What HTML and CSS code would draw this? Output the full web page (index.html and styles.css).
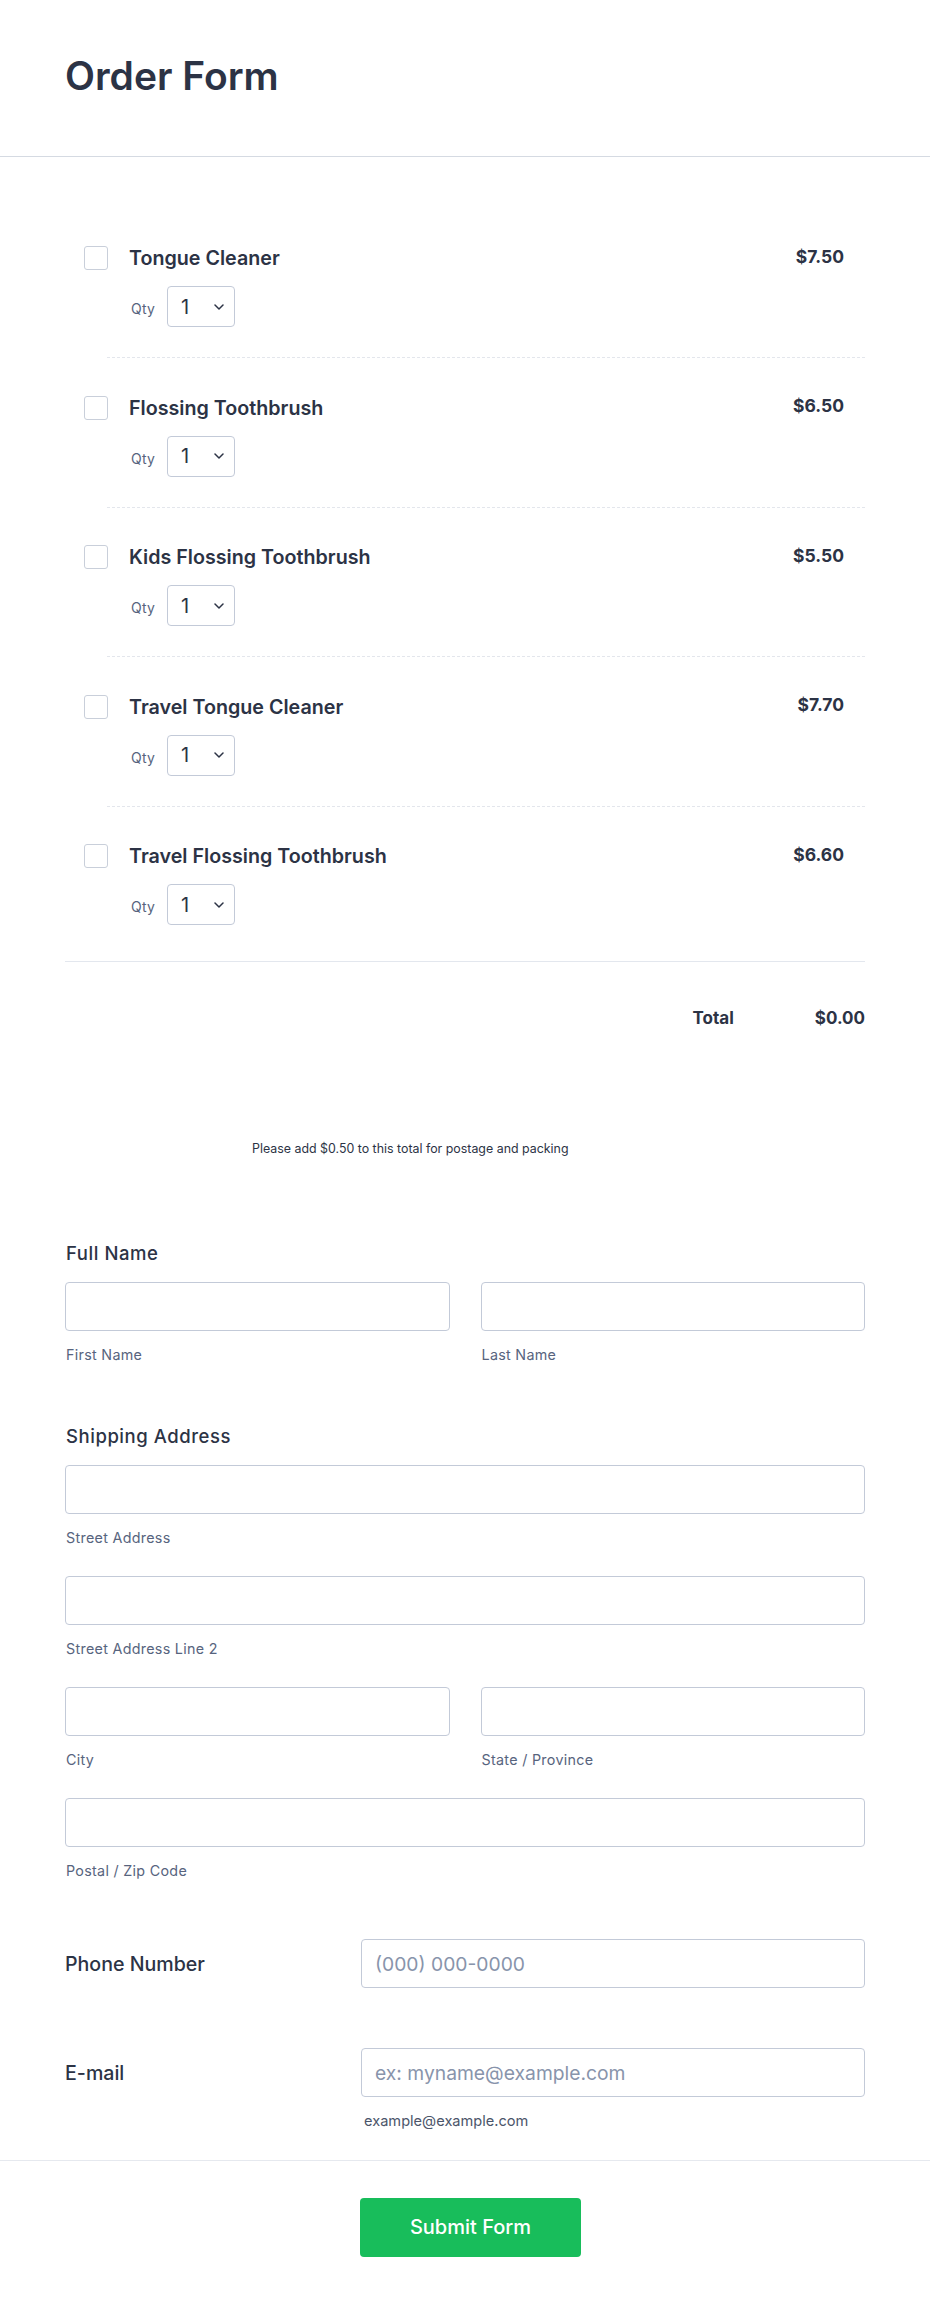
FILE: index.html
```html
<!DOCTYPE html>
<html lang="en">
<head>
<meta charset="utf-8">
<title>Order Form</title>
<link rel="stylesheet" href="styles.css">
</head>
<body>
<header class="header">
  <h1 class="title">Order Form</h1>
</header>

<main class="form">
  <section class="products">
    <div class="item">
      <span class="check"></span>
      <div class="item-body">
        <div class="item-name">Tongue Cleaner</div>
        <div class="qty">
          <span class="qty-label">Qty</span>
          <div class="select"><span class="select-value">1</span><svg class="chev" width="10" height="6" viewBox="0 0 10 6"><path d="M1 1l4 4 4-4" fill="none" stroke="#2c3345" stroke-width="1.5" stroke-linecap="round" stroke-linejoin="round"/></svg></div>
        </div>
      </div>
      <div class="price">$7.50</div>
    </div>
    <div class="sep"></div>
    <div class="item">
      <span class="check"></span>
      <div class="item-body">
        <div class="item-name">Flossing Toothbrush</div>
        <div class="qty">
          <span class="qty-label">Qty</span>
          <div class="select"><span class="select-value">1</span><svg class="chev" width="10" height="6" viewBox="0 0 10 6"><path d="M1 1l4 4 4-4" fill="none" stroke="#2c3345" stroke-width="1.5" stroke-linecap="round" stroke-linejoin="round"/></svg></div>
        </div>
      </div>
      <div class="price">$6.50</div>
    </div>
    <div class="sep"></div>
    <div class="item">
      <span class="check"></span>
      <div class="item-body">
        <div class="item-name">Kids Flossing Toothbrush</div>
        <div class="qty">
          <span class="qty-label">Qty</span>
          <div class="select"><span class="select-value">1</span><svg class="chev" width="10" height="6" viewBox="0 0 10 6"><path d="M1 1l4 4 4-4" fill="none" stroke="#2c3345" stroke-width="1.5" stroke-linecap="round" stroke-linejoin="round"/></svg></div>
        </div>
      </div>
      <div class="price">$5.50</div>
    </div>
    <div class="sep"></div>
    <div class="item">
      <span class="check"></span>
      <div class="item-body">
        <div class="item-name">Travel Tongue Cleaner</div>
        <div class="qty">
          <span class="qty-label">Qty</span>
          <div class="select"><span class="select-value">1</span><svg class="chev" width="10" height="6" viewBox="0 0 10 6"><path d="M1 1l4 4 4-4" fill="none" stroke="#2c3345" stroke-width="1.5" stroke-linecap="round" stroke-linejoin="round"/></svg></div>
        </div>
      </div>
      <div class="price">$7.70</div>
    </div>
    <div class="sep"></div>
    <div class="item item-last">
      <span class="check"></span>
      <div class="item-body">
        <div class="item-name">Travel Flossing Toothbrush</div>
        <div class="qty">
          <span class="qty-label">Qty</span>
          <div class="select"><span class="select-value">1</span><svg class="chev" width="10" height="6" viewBox="0 0 10 6"><path d="M1 1l4 4 4-4" fill="none" stroke="#2c3345" stroke-width="1.5" stroke-linecap="round" stroke-linejoin="round"/></svg></div>
        </div>
      </div>
      <div class="price">$6.60</div>
    </div>
    <div class="total">
      <span class="total-label">Total</span>
      <span class="total-value">$0.00</span>
    </div>
  </section>

  <p class="note">Please add $0.50 to this total for postage and packing</p>

  <div class="field field-name">
    <div class="field-label">Full Name</div>
    <div class="row2">
      <div class="sub">
        <div class="input"></div>
        <div class="sublabel">First Name</div>
      </div>
      <div class="sub">
        <div class="input"></div>
        <div class="sublabel">Last Name</div>
      </div>
    </div>
  </div>

  <div class="field field-address">
    <div class="field-label">Shipping Address</div>
    <div class="addr">
      <div class="sub">
        <div class="input"></div>
        <div class="sublabel">Street Address</div>
      </div>
      <div class="sub">
        <div class="input"></div>
        <div class="sublabel">Street Address Line 2</div>
      </div>
      <div class="row2">
        <div class="sub">
          <div class="input"></div>
          <div class="sublabel">City</div>
        </div>
        <div class="sub">
          <div class="input"></div>
          <div class="sublabel">State / Province</div>
        </div>
      </div>
      <div class="sub">
        <div class="input"></div>
        <div class="sublabel">Postal / Zip Code</div>
      </div>
    </div>
  </div>

  <div class="field-inline field-phone">
    <div class="inline-label">Phone Number</div>
    <div class="inline-control">
      <div class="input"><span class="placeholder">(000) 000-0000</span></div>
    </div>
  </div>

  <div class="field-inline field-email">
    <div class="inline-label">E-mail</div>
    <div class="inline-control">
      <div class="input"><span class="placeholder">ex: myname@example.com</span></div>
    </div>
  </div>
  <div class="email-sub">
    <div class="sublabel sublabel-email">example@example.com</div>
  </div>
</main>

<footer class="footer">
  <button class="submit" type="button">Submit Form</button>
</footer>
</body>
</html>
```

FILE: styles.css
```css
* {
  box-sizing: border-box;
}

html, body {
  margin: 0;
  padding: 0;
  background: #ffffff;
}

body {
  font-family: Inter, "Noto Sans", "DejaVu Sans", sans-serif;
  color: #2c3345;
  width: 930px;
}

/* Header */
.header {
  height: 157px;
  padding: 52px 65px 0;
  border-bottom: 1px solid #d5dae2;
}

.title {
  margin: 0;
  font-size: 39px;
  line-height: 48px;
  font-weight: 600;
  color: #2c3345;
}

/* Form body */
.form {
  margin: 0 65px;
  width: 800px;
}

.products {
  padding-top: 89px;
}

.item {
  display: flex;
  align-items: flex-start;
  padding: 37.5px 21px 30px 19px;
}

.products .item:first-child {
  padding-top: 0;
}

.item-last {
  padding-bottom: 36px;
  border-bottom: 1px solid #e3e7ee;
}

.check {
  flex: none;
  width: 24px;
  height: 24px;
  border: 1px solid #c9cfda;
  border-radius: 3px;
  background: #fff;
  margin-right: 21px;
}

.item-body {
  flex: 1;
}

.item-name {
  font-size: 19.7px;
  line-height: 24px;
  font-weight: 600;
  color: #2c3345;
}

.qty {
  display: flex;
  align-items: center;
  margin-top: 16px;
  margin-left: 2px;
}

.qty-label {
  font-size: 14px;
  line-height: 20px;
  letter-spacing: 0.2px;
  color: #57647e;
  margin-right: 12px;
  padding-top: 5px;
}

.select {
  width: 68px;
  height: 41px;
  border: 1px solid #c3cad8;
  border-radius: 4px;
  display: flex;
  align-items: center;
  justify-content: space-between;
  padding: 0 10px 0 13px;
  background: #fff;
}

.select-value {
  font-size: 20px;
  line-height: 24px;
  font-weight: 400;
  color: #2c3345;
}

.chev {
  display: block;
}

.price {
  flex: none;
  font-size: 17.5px;
  line-height: 24px;
  font-weight: 700;
  color: #2c3345;
  margin-top: -1.5px;
}

.sep {
  margin-left: 42px;
  border-top: 1px dashed #e3e6ec;
}

.total {
  display: flex;
  justify-content: flex-end;
  margin-top: 44px;
  font-size: 17px;
  line-height: 24px;
  font-weight: 700;
}

.total-label {
  margin-right: 81px;
}

.note {
  margin: 111px 0 0;
  padding-left: 187px;
  font-size: 12.4px;
  line-height: 16px;
  color: #2c3345;
}

/* Fields */
.field {
  margin-top: 59.5px;
}

.field-name {
  margin-top: 84px;
}

.field-label {
  font-size: 18.5px;
  line-height: 24px;
  font-weight: 500;
  letter-spacing: 0.55px;
  padding-left: 1px;
  margin-bottom: 17px;
}

.row2 {
  display: grid;
  grid-template-columns: 1fr 1fr;
  column-gap: 31px;
}

.addr {
  display: flex;
  flex-direction: column;
  gap: 28.5px;
}

.input {
  height: 48.6px;
  border: 1px solid #c3cad8;
  border-radius: 4px;
  background: #fff;
  display: flex;
  align-items: center;
  padding: 0 13px;
}

.sublabel {
  margin-top: 14px;
  font-size: 14.3px;
  line-height: 20px;
  letter-spacing: 0.3px;
  color: #57647e;
  padding-left: 1px;
}

.field-inline {
  display: flex;
  align-items: center;
}

.field-phone {
  margin-top: 58.4px;
}

.field-email {
  margin-top: 60.4px;
}

.inline-label {
  flex: none;
  width: 296px;
  font-size: 19.6px;
  line-height: 24px;
  font-weight: 500;
}

.inline-control {
  flex: 1;
}

.placeholder {
  font-size: 19.3px;
  line-height: 24px;
  color: #8894ab;
}

.email-sub {
  padding-left: 298px;
  padding-bottom: 29px;
}

.sublabel-email {
  font-size: 14.6px;
  letter-spacing: 0;
  color: #4b556a;
}

/* Footer */
.footer {
  border-top: 1px solid #e6e9ef;
  padding: 37px 0 51px 11px;
  display: flex;
  justify-content: center;
}

.submit {
  width: 221px;
  height: 58.7px;
  border: none;
  border-radius: 4px;
  background: #18bd5b;
  color: #ffffff;
  font-family: Inter, "Noto Sans", sans-serif;
  font-size: 20px;
  font-weight: 500;
  cursor: pointer;
}
```
